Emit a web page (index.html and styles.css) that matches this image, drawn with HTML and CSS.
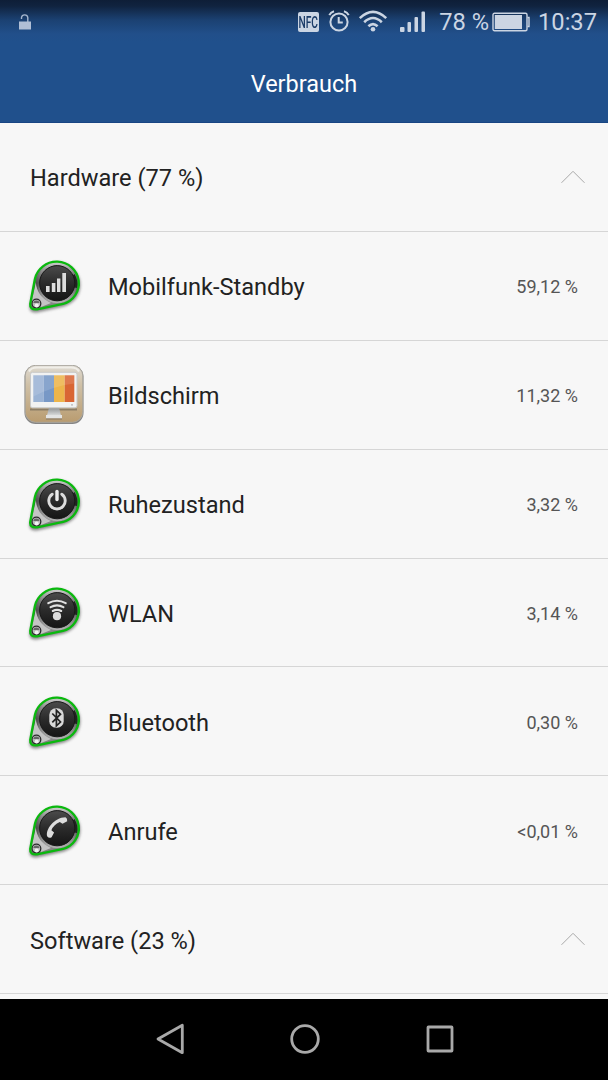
FILE: index.html
```html
<!DOCTYPE html>
<html lang="de">
<head>
    <meta charset="UTF-8">
    <meta name="viewport" content="width=device-width, initial-scale=1.0">
    <title>Verbrauch</title>
    <link rel="stylesheet" href="styles.css">
</head>
<body>
    <!-- shared badge behind the hardware icons -->
    <svg class="defs" width="0" height="0">
        <defs>
            <linearGradient id="metal" x1="0" y1="0" x2="0" y2="1">
                <stop offset="0" stop-color="#d4d4d4"/>
                <stop offset="0.22" stop-color="#777"/>
                <stop offset="0.5" stop-color="#454545"/>
                <stop offset="0.75" stop-color="#999"/>
                <stop offset="1" stop-color="#777"/>
            </linearGradient>
            <linearGradient id="ring" x1="0" y1="0" x2="0" y2="1">
                <stop offset="0" stop-color="#c8c8c8"/>
                <stop offset="0.3" stop-color="#777"/>
                <stop offset="0.5" stop-color="#555"/>
                <stop offset="1" stop-color="#b5b5b5"/>
            </linearGradient>
            <linearGradient id="disc" x1="0" y1="0" x2="0" y2="1">
                <stop offset="0" stop-color="#4b4b4b"/>
                <stop offset="0.5" stop-color="#2b2b2b"/>
                <stop offset="1" stop-color="#151515"/>
            </linearGradient>
            <linearGradient id="wood" x1="0" y1="0" x2="0" y2="1">
                <stop offset="0" stop-color="#dedad2"/>
                <stop offset="0.35" stop-color="#cfc0a6"/>
                <stop offset="1" stop-color="#b99c70"/>
            </linearGradient>
            <linearGradient id="stand" x1="0" y1="0" x2="0" y2="1">
                <stop offset="0" stop-color="#8d9092"/>
                <stop offset="1" stop-color="#dadcdc"/>
            </linearGradient>
            <filter id="soft" x="-20%" y="-20%" width="140%" height="140%">
                <feGaussianBlur stdDeviation="1.5"/>
            </filter>
            <symbol id="badge" viewBox="9 6 60 60">
                <path d="M15 54L20.3 28A22 21.5 0 1 1 48 53.6L21 59.6Q14 60 15 54Z" transform="translate(.6 2)" fill="#555" stroke="#555" stroke-width="2" opacity=".7" filter="url(#soft)"/>
                <path d="M15.2 54L19.9 29A22.2 21.6 0 1 1 48 54L22 59.3Q14.6 60 15.2 54Z" fill="url(#metal)"/>
                <path d="M20.8 32Q22 47 36 53L26 57L17 51Z" fill="#c4c4c4"/>
                <circle cx="42.2" cy="33" r="20" fill="url(#ring)"/>
                <path d="M59.5 24A19.3 19.3 0 0 1 62 38L57 37V26Z" fill="#222"/>
                <circle cx="42.2" cy="33.2" r="17.6" fill="url(#disc)" stroke="#181818"/>
                <circle cx="21.4" cy="53.6" r="4.4" fill="#bbb" stroke="#292929" stroke-width="1.3"/>
                <path d="M18.2 53A3.3 3.3 0 0 1 24.6 53Z" fill="#666"/>
                <circle cx="21.7" cy="55.5" r="2" fill="#f2f2f2"/>
                <path d="M15.2 54L19.9 29A22.2 21.6 0 1 1 48 54L22 59.3Q14.6 60 15.2 54Z" fill="none" stroke="#0ab90e" stroke-width="2.3"/>
            </symbol>
            <symbol id="chevron" viewBox="0 0 26 14">
                <path d="M1.5 12.8L13 1.3L24.5 12.8" fill="none" stroke="#a9a9a9"/>
            </symbol>
        </defs>
    </svg>

    <header class="header">
        <div class="statusbar">
            <svg class="lock" width="14" height="18" viewBox="0 0 14 18">
                <path d="M3.5 6V4.5A3.2 3.2 0 0 1 9.8 4.5V9" fill="none" stroke="#a6b6cd" stroke-width="1.4"/>
                <rect x="1" y="8.5" width="12" height="8" fill="#b0bfd6"/>
            </svg>
            <span class="nfc"><span>NFC</span></span>
            <svg class="alarm" width="22" height="24" viewBox="0 0 22 24" fill="none" stroke="#cbd5e3" stroke-width="2">
                <circle cx="11" cy="13" r="8.6"/>
                <path d="M10.7 8V13.6H14.8M1.3 6.2Q2.7 3.2 6 2.2M16 2.2Q19.3 3.2 20.7 6.2"/>
            </svg>
            <svg class="wifi" width="30" height="24" viewBox="0 0 30 24" fill="none" stroke="#cbd5e3" stroke-width="2.6">
                <path d="M1.8 9.1Q15-3.5 28.2 9.1M6.2 13.2Q15 4.8 23.8 13.2M10.4 17.2Q15 13 19.6 17.2"/>
                <circle cx="15" cy="20.2" r="2.3" fill="#cbd5e3" stroke="none"/>
            </svg>
            <svg class="signal" width="26" height="22" viewBox="0 0 26 22" fill="#cbd5e3">
                <rect x="0" y="16" width="4.5" height="5" rx="1"/>
                <rect x="7.5" y="11" width="3.5" height="10" rx="1"/>
                <rect x="14.5" y="6" width="3.5" height="15" rx="1"/>
                <rect x="21.5" y="0.5" width="3.5" height="20.5" rx="1"/>
            </svg>
            <span class="status-text charge">78 %</span>
            <svg class="battery" width="38" height="20" viewBox="0 0 38 20">
                <rect x="1" y="1.2" width="34" height="17.6" rx="1.5" fill="none" stroke="#cbd5e3" stroke-width="1.4"/>
                <path d="M35.5 5.5H37V14.5H35.5" fill="none" stroke="#cbd5e3" stroke-width="1.4"/>
                <rect x="2.8" y="3" width="27.2" height="14" fill="#cbd5e3"/>
            </svg>
            <span class="status-text clock">10:37</span>
        </div>
        <h1>Verbrauch</h1>
    </header>

    <main class="list">
        <div class="row section">
            <span class="name">Hardware (77 %)</span>
            <svg class="chevron"><use href="#chevron"/></svg>
        </div>
        <div class="row">
            <svg class="icon" viewBox="9 6 60 60">
                <use href="#badge" x="9" y="6" width="60" height="60"/>
                <path d="M31 36H34.6V42H31ZM36.8 33H40.4V42H36.8ZM42 28.5H45.4V42H42ZM47.3 23H51V42H47.3Z" fill="#ddd"/>
            </svg>
            <span class="name">Mobilfunk-Standby</span>
            <span class="value">59,12 %</span>
        </div>
        <div class="row">
            <svg class="icon" viewBox="9 10.5 60 60">
                <rect x="9.5" y="11" width="59" height="58.5" rx="11" fill="#858585"/>
                <rect x="10.2" y="10.8" width="57.6" height="57" rx="10.5" fill="url(#wood)" stroke="#aaa79f"/>
                <path d="M14 17Q16 13 22 13H56Q62 13 64 17" fill="none" stroke="#f0eee8" stroke-width="2"/>
                <path d="M15 56H62V54H15Z" fill="#8c7e67"/>
                <path d="M34 53H44L46 61H32Z" fill="url(#stand)"/>
                <path d="M31 60.5H47V64H31Z" fill="#e3e4e4"/>
                <path d="M31 64.5H47" stroke="#837664"/>
                <rect x="15.5" y="17.8" width="46.5" height="35.5" rx="2" fill="#f1f2f2" stroke="#c8c9c9"/>
                <rect x="18.3" y="20.8" width="10.5" height="26.7" fill="#9ab3d5"/>
                <rect x="28.8" y="20.8" width="10.2" height="26.7" fill="#7798c6"/>
                <rect x="39" y="20.8" width="10.7" height="26.7" fill="#edb54b"/>
                <rect x="49.7" y="20.8" width="9.6" height="26.7" fill="#d96634"/>
                <path d="M18.3 20.8H59.3V29Q40 31 18.3 42Z" fill="#fff" opacity=".13"/>
                <circle cx="57" cy="50.4" r=".8" fill="#aaa"/>
            </svg>
            <span class="name">Bildschirm</span>
            <span class="value">11,32 %</span>
        </div>
        <div class="row">
            <svg class="icon" viewBox="9 6 60 60">
                <use href="#badge" x="9" y="6" width="60" height="60"/>
                <path d="M37.2 26.2A8.2 8.2 0 1 0 46.8 26.2" fill="none" stroke="#ddd" stroke-width="2.9" stroke-linecap="round"/>
                <path d="M42 23.5V31.5" stroke="#eee" stroke-width="3.4" stroke-linecap="round"/>
            </svg>
            <span class="name">Ruhezustand</span>
            <span class="value">3,32 %</span>
        </div>
        <div class="row">
            <svg class="icon" viewBox="9 6 60 60">
                <use href="#badge" x="9" y="6" width="60" height="60"/>
                <path d="M33.3 26.2Q42 21.2 50.7 26.2M35.6 30.2Q42 26.6 48.4 30.2M37.8 34Q42 31.8 46.2 34" fill="none" stroke="#e2e2e2" stroke-width="2.1" stroke-linecap="round"/>
                <circle cx="42" cy="39.2" r="4.1" fill="#ddd"/>
            </svg>
            <span class="name">WLAN</span>
            <span class="value">3,14 %</span>
        </div>
        <div class="row">
            <svg class="icon" viewBox="9 6 60 60">
                <use href="#badge" x="9" y="6" width="60" height="60"/>
                <rect x="34.3" y="22.3" width="14.4" height="19.4" rx="6.5" fill="#d9d9d9"/>
                <path d="M37.3 27.5L45.5 36L41.4 39.8V24.3L45.5 28.2L37.3 36.3" fill="none" stroke="#222" stroke-width="1.7"/>
            </svg>
            <span class="name">Bluetooth</span>
            <span class="value">0,30 %</span>
        </div>
        <div class="row">
            <svg class="icon" viewBox="9 6 60 60">
                <use href="#badge" x="9" y="6" width="60" height="60"/>
                <path d="M32.3 41.5C30 35 39 22.5 50.5 22.3Q52.5 23.5 52.2 26.2L47.5 28.8L44.8 26.9Q38.5 29.5 36.4 35.2L39.1 37.5L36.6 42.3Q34 43.6 32.3 41.5Z" fill="#ddd"/>
            </svg>
            <span class="name">Anrufe</span>
            <span class="value">&lt;0,01 %</span>
        </div>
        <div class="row section">
            <span class="name">Software (23 %)</span>
            <svg class="chevron"><use href="#chevron"/></svg>
        </div>
    </main>

    <nav class="navbar">
        <svg width="32" height="36" viewBox="0 0 32 36"><path d="M28.3 4.3V31.7L4 18Z"/></svg>
        <svg width="32" height="36" viewBox="0 0 32 36"><circle cx="16" cy="18" r="13.3"/></svg>
        <svg width="32" height="36" viewBox="0 0 32 36"><rect x="4" y="6" width="24" height="24" rx="0.5"/></svg>
    </nav>
</body>
</html>
```
FILE: styles.css
```css
* {
    box-sizing: border-box;
}
body {
    display: flex;
    flex-direction: column;
    height: 1080px;
    margin: 0;
    overflow: hidden;
    background: #f7f7f7;
    color: #222;
    font-family: Roboto, sans-serif;
}
svg {
    display: block;
    flex: none;
}
.defs {
    position: absolute;
}
.header {
    height: 123px;
    flex: none;
    background: linear-gradient(#0e1e37 0, #10233f 6px, #1b4172 20px, #214f8a 34px, #20508c 42px);
    border-bottom: 1px solid #184583;
    color: #fff;
}
.statusbar {
    display: flex;
    align-items: center;
    height: 43px;
    padding: 0 11px 0 18px;
}
.nfc {
    display: flex;
    align-items: center;
    justify-content: center;
    width: 21px;
    height: 20px;
    margin-left: auto;
    margin-right: 9px;
    border-radius: 2px;
    background: #cbd5e3;
    color: #1b3b67;
    font-size: 17px;
    font-weight: 500;
}
.nfc span {
    transform: scaleX(0.6);
}
.alarm {
    margin: -2px 8px 0 0;
}
.wifi {
    margin: -2px 12px 0 0;
}
.signal {
    margin-right: 13px;
}
.status-text {
    color: #cbd5e3;
    font-size: 23.7px;
    line-height: 28px;
    padding-top: 1px;
    white-space: nowrap;
}
.charge {
    margin-right: 3px;
}
.battery {
    margin-right: 8px;
}
h1 {
    margin: 26px 0 0;
    font-size: 23.5px;
    line-height: 30px;
    font-weight: 400;
    text-align: center;
}
.list {
    flex: none;
    height: 876px;
}
.row {
    display: flex;
    align-items: center;
    height: 108.9px;
    padding: 1px 30px 0 24px;
    border-bottom: 1px solid #d6d6d6;
}
.section {
    padding: 0 22px 0 30px;
}
.icon {
    width: 60px;
    height: 60px;
    margin-right: 24px;
}
.name {
    flex: 1;
    padding-top: 2px;
    font-size: 23.6px;
}
.section .name {
    padding-top: 3px;
}
.value {
    padding-top: 1px;
    color: #555;
    font-size: 18px;
}
.chevron {
    width: 26px;
    height: 14px;
}
.navbar {
    display: flex;
    align-items: center;
    justify-content: center;
    gap: 103px;
    flex: 1;
    padding: 0 0 1px 1px;
    background: #000;
}
.navbar svg {
    fill: none;
    stroke: #a9a9a9;
    stroke-width: 2.8;
    stroke-linejoin: round;
}
```
